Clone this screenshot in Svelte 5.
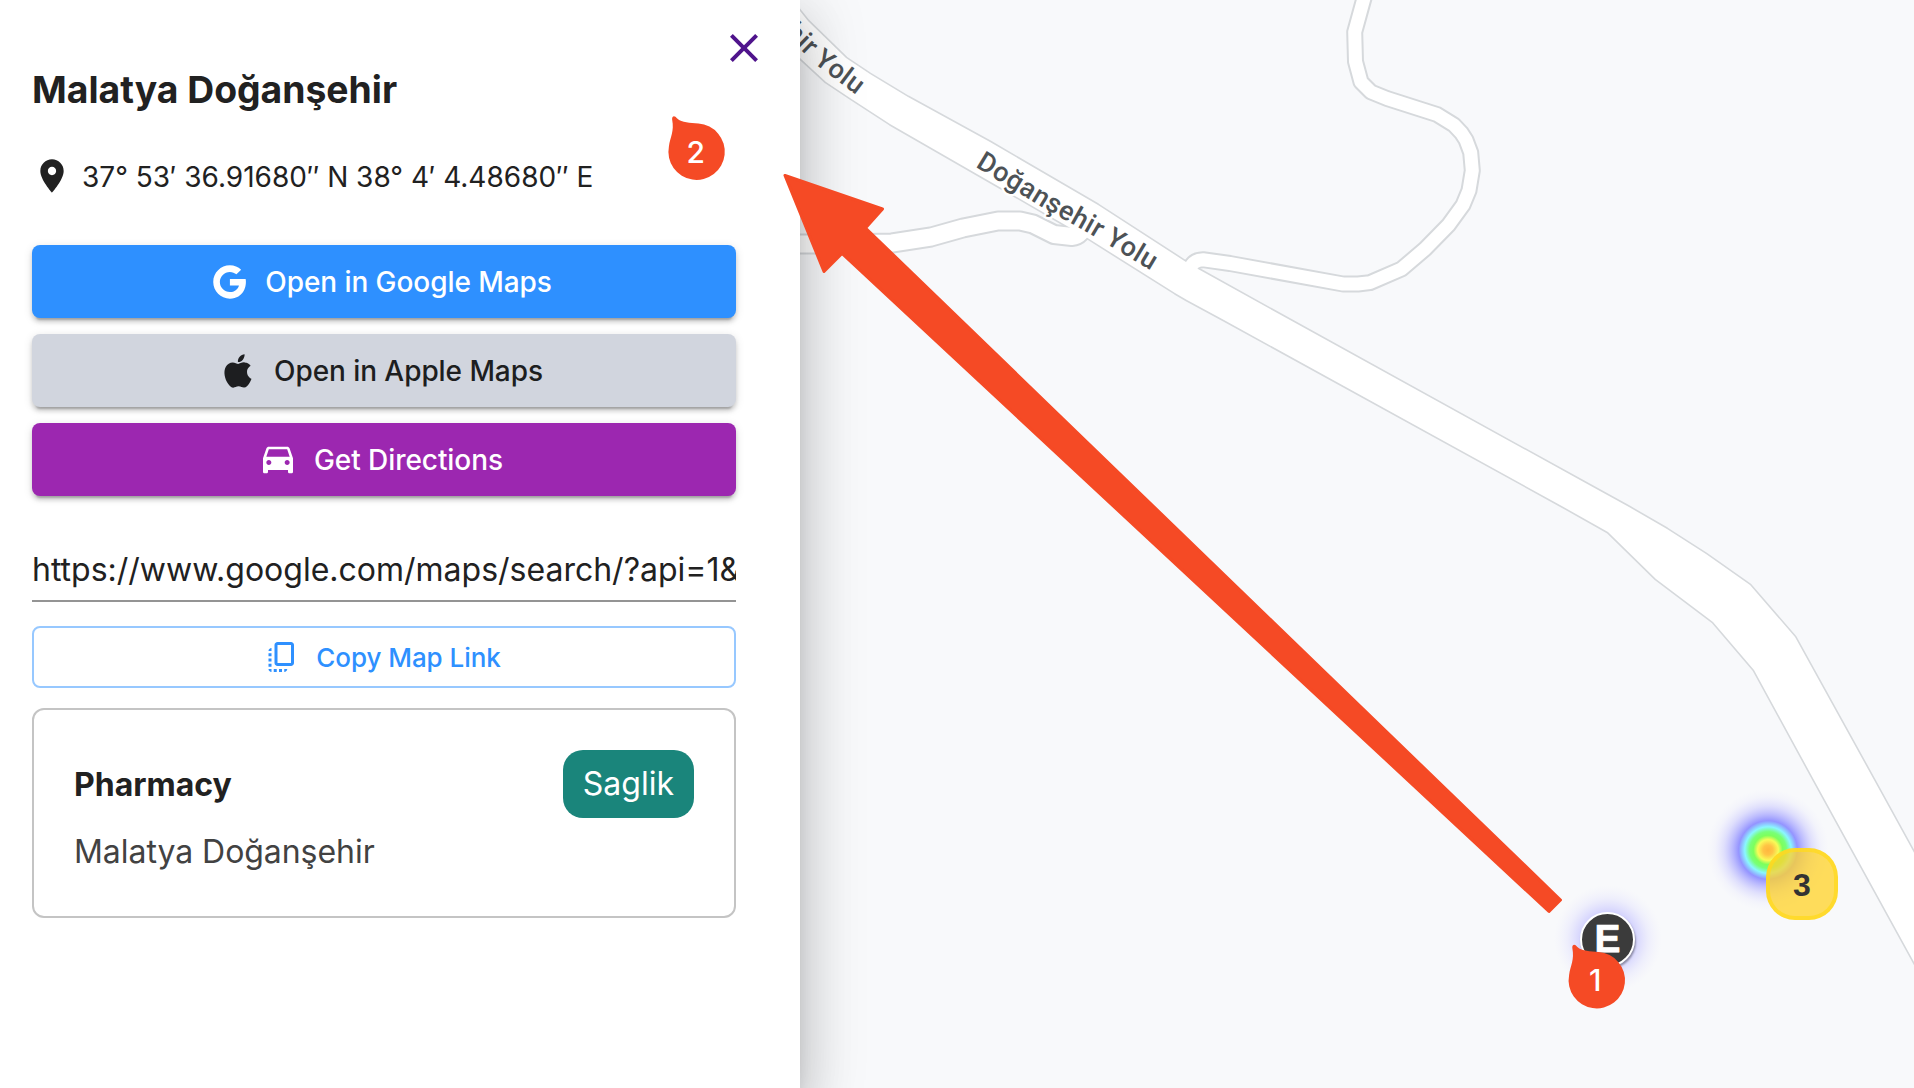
<script>
  const title = 'Malatya Doğanşehir';
  const coordinates = '37° 53′ 36.91680″ N 38° 4′ 4.48680″ E';
  const mapLink = 'https://www.google.com/maps/search/?api=1&';

  const icons = {
    close: 'M19 6.41 17.59 5 12 10.59 6.41 5 5 6.41 10.59 12 5 17.59 6.41 19 12 13.41 17.59 19 19 17.59 13.41 12z',
    pin: 'M12 2C8.13 2 5 5.13 5 9c0 5.25 7 13 7 13s7-7.75 7-13c0-3.87-3.13-7-7-7zm0 9.5c-1.38 0-2.5-1.12-2.5-2.5s1.12-2.5 2.5-2.5 2.5 1.12 2.5 2.5-1.12 2.5-2.5 2.5z',
    google: 'M12.545 10.239v3.821h5.445c-.712 2.315-2.647 3.972-5.445 3.972-3.332 0-6.033-2.701-6.033-6.032s2.701-6.032 6.033-6.032c1.498 0 2.866.549 3.921 1.453l2.814-2.814C17.503 2.988 15.139 2 12.545 2 7.021 2 2.543 6.477 2.543 12s4.478 10 10.002 10c8.396 0 10.249-7.85 9.426-11.748z',
    apple: 'M18.71 19.5c-.83 1.24-1.71 2.45-3.05 2.47-1.34.03-1.77-.79-3.29-.79-1.53 0-2 .77-3.27.82-1.31.05-2.3-1.32-3.14-2.53C4.25 17 2.94 12.45 4.7 9.39c.87-1.52 2.43-2.48 4.12-2.51 1.28-.02 2.5.87 3.29.87.78 0 2.26-1.07 3.81-.91.65.03 2.47.26 3.64 1.98-.09.06-2.17 1.28-2.15 3.81.03 3.02 2.65 4.03 2.68 4.04-.03.07-.42 1.44-1.38 2.83M13 3.5c.73-.83 1.94-1.46 2.94-1.5.13 1.17-.34 2.35-1.04 3.19-.69.85-1.83 1.51-2.95 1.42-.15-1.15.41-2.35 1.05-3.11z',
    car: 'M18.92 5.01C18.72 4.42 18.16 4 17.5 4h-11c-.66 0-1.21.42-1.42 1.01L3 11v8c0 .55.45 1 1 1h1c.55 0 1-.45 1-1v-1h12v1c0 .55.45 1 1 1h1c.55 0 1-.45 1-1v-8l-2.08-5.99zM6.5 15c-.83 0-1.5-.67-1.5-1.5S5.67 12 6.5 12s1.5.67 1.5 1.5S7.33 15 6.5 15zm11 0c-.83 0-1.5-.67-1.5-1.5s.67-1.5 1.5-1.5 1.5.67 1.5 1.5-.67 1.5-1.5 1.5zM5 10l1.5-4.5h11L19 10H5z',
    copy: 'M18 2H9c-1.1 0-2 .9-2 2v12c0 1.1.9 2 2 2h9c1.1 0 2-.9 2-2V4c0-1.1-.9-2-2-2zm0 14H9V4h9v12zM3 15v-2h2v2H3zm0-5.5h2v2H3v-2zM10 20h2v2h-2v-2zm-7-1.5v-2h2v2H3zM5 22c-1.1 0-2-.9-2-2h2v2zm3.5 0h-2v-2h2v2zm5 0v-2h2c0 1.1-.9 2-2 2zM5 6v2H3c0-1.1.9-2 2-2z'
  };

  const actions = [
    { kind: 'google', label: 'Open in Google Maps' },
    { kind: 'apple', label: 'Open in Apple Maps' },
    { kind: 'car', label: 'Get Directions' }
  ];

  const mainRoad =
    'M780-14 800 11 808 21 846 58 870 74 908 97 990 142 1098 205 1186 262 1198 269 1290 320 1580 480 1629 507 1667 529 1706 554 1750 585 1795 637 1874 780 1930 882V991L1914 962 1814 780 1754 670 1713 622 1656 579 1608 532 1560 505 1224 320 1187 300 1175 293 1086 237 1010 193 890 124 850 98 826 82 800 58 780 40z';
  const eastLane =
    'M1367-12 1363.5 0 1354.7 32 1355.5 61.5 1361 82 1371 92 1387 98.5 1437 114.5 1454 125 1461.5 133 1466 140 1470.7 152.5 1472.3 170.5 1469 190.5 1463 205 1448.5 225 1425 249 1401.5 269 1370 282.6 1358 284 1343 284 1230 263.5 1203 259.7C1195 260 1190 264 1190 272';
  const westLane =
    'M780 244H840L892 243 931 237 963 228 998 221H1020L1033 224 1054 234.5 1072 236.5C1080 236 1082 230 1086 222';
  const marker = 'M-24.4-32.6C-24.6-36.4-21.4-36.4-19.6-33.6-14-28.4-7-29.6 2-28.2A28.2 28.2 0 1 1-27.6-5.4C-26.4-15-22-20-24.4-32.6z';
</script>

{#snippet icon(name)}
  <svg class="icon {name}" viewBox="0 0 24 24" aria-hidden="true"><path d={icons[name]} /></svg>
{/snippet}

<div class="app">
  <svg class="map" viewBox="0 0 1914 1088">
    <defs>
      <radialGradient id="hot">
        <stop offset="0" stop-color="#ffb63e" />
        <stop offset=".08" stop-color="#ffc445" />
        <stop offset=".17" stop-color="#f8fb58" />
        <stop offset=".24" stop-color="#7dff5c" />
        <stop offset=".3" stop-color="#78ff78" />
        <stop offset=".38" stop-color="#8af6ff" />
        <stop offset=".48" stop-color="#9494ff" />
        <stop offset=".58" stop-color="#a5a4ff" stop-opacity=".75" />
        <stop offset=".72" stop-color="#b9b7ff" stop-opacity=".4" />
        <stop offset=".87" stop-color="#cccaff" stop-opacity=".12" />
        <stop offset="1" stop-color="#dcdaff" stop-opacity="0" />
      </radialGradient>
      <radialGradient id="cool">
        <stop offset=".3" stop-color="#bcbaff" stop-opacity=".9" />
        <stop offset=".52" stop-color="#c4c2ff" stop-opacity=".65" />
        <stop offset=".75" stop-color="#cfcdff" stop-opacity=".25" />
        <stop offset="1" stop-color="#e4e2ff" stop-opacity="0" />
      </radialGradient>
      <path id="label-north" d="M720-25 795 44 817 65.5 857 95.5 868 103" />
      <path id="label-center" d="M975 166.500 1040 206 1090 234 1160 276" />
    </defs>
    <g class="casing">
      <path d={mainRoad} />
      <path class="lane east" d={eastLane} />
      <path class="lane west" d={westLane} />
    </g>
    <g class="surface">
      <path d={mainRoad} />
      <path class="lane east" d={eastLane} />
      <path class="lane west" d={westLane} />
    </g>
    <text class="road-name" text-anchor="end"><textPath href="#label-north" startOffset="93%">hir Yolu</textPath></text>
    <text class="road-name"><textPath href="#label-center">Doğanşehir Yolu</textPath></text>
    <circle cx="1768" cy="850" r="61" fill="url(#hot)" />
    <circle cx="1608" cy="939" r="54" fill="url(#cool)" />
  </svg>

  <aside class="panel">
    <button class="close" aria-label="Close">{@render icon('close')}</button>
    <h1>{title}</h1>
    <p class="coords">{@render icon('pin')}<span>{coordinates}</span></p>
    <div class="actions">
      {#each actions as action}
        <button class="action {action.kind}">{@render icon(action.kind)}<span>{action.label}</span></button>
      {/each}
    </div>
    <div class="link">{mapLink}</div>
    <button class="copy-link">{@render icon('copy')}<span>Copy Map Link</span></button>
    <section class="card">
      <header>
        <h2>Pharmacy</h2>
        <span class="tag">Saglik</span>
      </header>
      <p>{title}</p>
    </section>
  </aside>

  <div class="cluster">3</div>
  <div class="place">E</div>

  <svg class="notes" viewBox="0 0 1914 1088">
    <path class="arrow" d="M785 175.500 882.500 209 865.500 228 1560.500 900 1549 911.500 842 253.500 824 271.500z" />
    <g transform="translate(696.500 151.800)"><path d={marker} /><text x="-.8" y="10.800">2</text></g>
    <g transform="translate(1596.700 980.300)"><path d={marker} /><text x="-1.500" y="11">1</text></g>
  </svg>
</div>

<style>
  :global(body) {
    overflow: hidden;
  }
  .app {
    position: relative;
    width: 1914px;
    height: 1088px;
    overflow: hidden;
    background: #f8f9fb;
    color: #212121;
    font-family: Inter, 'Liberation Sans', sans-serif;
    font-optical-sizing: none;
    font-variant-ligatures: none;
  }
  .map,
  .notes {
    position: absolute;
    inset: 0;
    width: 1914px;
    height: 1088px;
  }
  .casing path {
    fill: none;
    stroke: #d6d9dc;
    stroke-width: 3.2;
    stroke-linejoin: round;
  }
  .casing .east { stroke-width: 17; }
  .casing .west { stroke-width: 21; }
  .surface path { fill: #fff; }
  .surface .lane {
    fill: none;
    stroke: #fff;
    stroke-linejoin: round;
  }
  .surface .east { stroke-width: 13; }
  .surface .west { stroke-width: 17; }
  .road-name {
    font: 500 27px Roboto, sans-serif;
    letter-spacing: 0.5px;
    fill: #4d5256;
    stroke: #fff;
    stroke-width: 5px;
    stroke-linejoin: round;
    paint-order: stroke;
  }
  .panel {
    position: relative;
    display: flex;
    flex-direction: column;
    box-sizing: border-box;
    width: 800px;
    height: 1088px;
    padding: 24px 64px 0 32px;
    background: #fff;
    box-shadow:
      0 16px 20px -10px rgba(0, 0, 0, 0.2),
      0 32px 48px 4px rgba(0, 0, 0, 0.14),
      0 12px 60px 10px rgba(0, 0, 0, 0.12);
  }
  button {
    display: flex;
    align-items: center;
    justify-content: center;
    box-sizing: border-box;
    margin: 0;
    padding: 0;
    border: 0;
    background: none;
    font-family: inherit;
    font-optical-sizing: none;
    font-weight: 500;
  }
  .icon {
    flex: none;
    width: 40px;
    height: 40px;
    fill: currentColor;
  }
  .close {
    align-self: flex-end;
    margin-right: -32px;
    color: #4f148c;
  }
  .icon.close {
    width: 48px;
    height: 48px;
    margin: 0;
  }
  h1,
  h2,
  p {
    margin: 0;
  }
  h1 {
    margin-top: -4px;
    font-size: 37.3px;
    line-height: 44px;
    font-weight: 700;
  }
  .coords {
    display: flex;
    align-items: center;
    height: 40px;
    gap: 10px;
    margin-top: 44px;
    font-size: 28px;
  }
  .coords span {
    padding-top: 2px;
  }
  .actions {
    display: grid;
    grid-auto-rows: 73px;
    gap: 16px;
    margin-top: 49px;
  }
  .action {
    gap: 16px;
    padding-right: 7px;
    border-radius: 8px;
    color: #fff;
    font-size: 28px;
    letter-spacing: -0.07px;
    box-shadow:
      0 6px 2px -4px rgba(0, 0, 0, 0.2),
      0 4px 4px rgba(0, 0, 0, 0.14),
      0 2px 10px rgba(0, 0, 0, 0.12);
  }
  .action.google { background: #2e90ff; }
  .action.apple { background: #d1d5de; color: #1d1e20; }
  .action.car { background: #9c27b0; }
  .link {
    height: 60px;
    margin-top: 44px;
    border-bottom: 2px solid #949494;
    overflow: hidden;
    white-space: nowrap;
    font-size: 32px;
    line-height: 60px;
    font-feature-settings: 'calt' 0;
  }
  .copy-link {
    height: 62px;
    gap: 16px;
    margin-top: 24px;
    padding-right: 3px;
    border: 2px solid #97c8ff;
    border-radius: 8px;
    color: #2e90ff;
    font-size: 26px;
    letter-spacing: -0.05px;
  }
  .icon.copy {
    width: 36px;
    height: 36px;
  }
  .card {
    box-sizing: border-box;
    height: 210px;
    margin-top: 20px;
    padding: 40px 40px 0;
    border: 2px solid #c4c4c4;
    border-radius: 12px;
  }
  .card header {
    display: flex;
    align-items: center;
    justify-content: space-between;
    height: 68px;
  }
  h2 {
    font-size: 32px;
    font-weight: 700;
  }
  .tag {
    padding: 0 20px;
    border-radius: 20px;
    background: #1a857b;
    color: #fff;
    font-size: 32px;
    line-height: 68px;
  }
  .card p {
    margin-top: 14px;
    color: #424242;
    font-size: 32px;
    line-height: 40px;
    letter-spacing: -0.05px;
  }
  .cluster {
    position: absolute;
    left: 1766px;
    top: 848px;
    box-sizing: border-box;
    width: 72px;
    height: 72px;
    border: 4px solid rgba(255, 217, 30, 0.75);
    border-radius: 29px;
    background: rgba(255, 212, 46, 0.78);
    color: #333;
    font: 700 32px/67px 'Liberation Sans', sans-serif;
    text-align: center;
  }
  .place {
    position: absolute;
    left: 1580px;
    top: 912px;
    box-sizing: border-box;
    width: 55px;
    height: 55px;
    border: 2px solid #fff;
    border-radius: 50%;
    background: #3b3b3b;
    box-shadow: 1px 2px 2px rgba(0, 0, 0, 0.35);
    color: #fff;
    font: 700 39px/49px 'Liberation Sans', sans-serif;
    text-align: center;
    text-shadow: 0 1px 0 #9a9a9a;
    -webkit-text-stroke: 0.6px #fff;
  }
  .notes path { fill: #f54a25; }
  .notes .arrow {
    stroke: #f54a25;
    stroke-width: 3;
    stroke-linejoin: round;
  }
  .notes text {
    fill: #fff;
    font: 500 30px Inter, sans-serif;
    text-anchor: middle;
  }
</style>
